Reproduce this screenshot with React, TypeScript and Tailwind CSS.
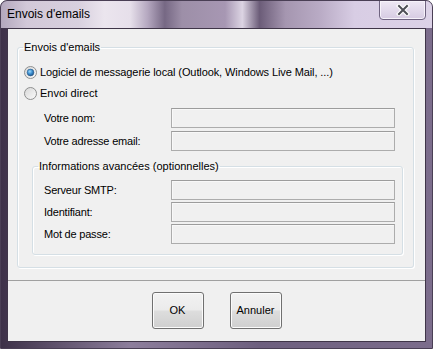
import React from "react";

const font = { fontFamily: '"Liberation Sans", Arial, sans-serif' };

function Radio({ checked }: { checked: boolean }) {
  return (
    <svg width="13" height="13" viewBox="0 0 13 13" className="shrink-0">
      <defs>
        <linearGradient id={checked ? "rgA" : "rgB"} x1="0" y1="0" x2="1" y2="1">
          <stop offset="0" stopColor="#d6d6d6" />
          <stop offset="1" stopColor="#fbfbfb" />
        </linearGradient>
        <radialGradient id="rdot" cx="0.4" cy="0.35" r="0.7">
          <stop offset="0" stopColor="#9fd8fb" />
          <stop offset="0.5" stopColor="#3b8fd0" />
          <stop offset="1" stopColor="#1d4f84" />
        </radialGradient>
      </defs>
      <circle cx="6.5" cy="6.5" r="6" fill={`url(#${checked ? "rgA" : "rgB"})`} stroke="#8e8f8f" strokeWidth="1" />
      {checked && <circle cx="6.5" cy="6.5" r="3.4" fill="url(#rdot)" stroke="#2a5b8a" strokeWidth="0.6" />}
    </svg>
  );
}

function Field({ label, indent }: { label: string; indent: string }) {
  return (
    <div className={`flex items-center h-[20px] ${indent}`}>
      <span className="w-[127px] shrink-0 text-[11px] leading-[13px] tracking-[-0.2px] text-black">{label}</span>
      <div className="w-[224px] h-[20px] border border-[#acacac] border-t-[#9c9c9c] bg-[#f0f0f0] shadow-[inset_1px_1px_0_#f8f8f8]" />
    </div>
  );
}

function Btn({ children }: { children: React.ReactNode }) {
  return (
    <div className="w-[52px] h-[37px] rounded-[3px] border border-[#707070] bg-[linear-gradient(180deg,#f2f2f2_0%,#ebebeb_48%,#dddddd_52%,#cfcfcf_100%)] shadow-[inset_0_0_0_1px_#fbfbfb] flex items-center justify-center text-[11px] text-black">
      {children}
    </div>
  );
}

export default function App() {
  return (
    <div
      style={font}
      className="w-[433px] h-[349px] flex flex-col rounded-t-[7px] border border-[#4a3f55] overflow-hidden bg-[linear-gradient(90deg,#3d3148_0%,#8d7e9c_30%,#6d5f7e_60%,#7c6d8c_100%)]"
    >
      {/* Title bar */}
      <div className="h-[27px] flex items-start shrink-0 bg-[linear-gradient(90deg,#b3a8bd_0%,#d2c8d8_6%,#d8d0de_18%,#ebe5ee_24%,#e6dfea_30%,#b5a8c0_34%,#766884_38%,#9d8fa8_42%,#a797b3_52%,#dcd4e3_56%,#6b5c78_60%,#a596b0_66%,#b9abc5_74%,#d8cde4_82%,#dcd2e7_100%)]">
        <span className="ml-[6px] mt-[6px] text-[12px] leading-[15px] text-black">Envois d'emails</span>
        <div className="ml-auto mr-[6px] -mt-[1px] w-[47px] h-[20px] rounded-b-[4px] border border-[#6f6380] bg-[linear-gradient(180deg,#eee8f4_0%,#e2d9eb_50%,#d6cbe2_100%)] shadow-[inset_0_0_0_1px_#f6f2fa] flex items-center justify-center">
          <svg width="14" height="12" viewBox="0 0 14 12">
            <path d="M3 2 L11 10 M11 2 L3 10" stroke="#ffffff" strokeWidth="4.2" strokeLinecap="square" />
            <path d="M3 2 L11 10 M11 2 L3 10" stroke="#4e4e56" strokeWidth="2" strokeLinecap="square" />
          </svg>
        </div>
      </div>

      {/* Client area */}
      <div className="flex-1 mx-[6px] mb-[6px] border border-[#3f3548] bg-[#f0f0f0] flex flex-col">
        <div className="pt-[12px] pl-[9px] pr-[11px]">
          <fieldset className="border border-[#d5dfe5] rounded-[3px] shadow-[inset_1px_1px_0_#ffffff,1px_1px_0_#ffffff] pb-[12px]">
            <legend className="ml-[5px] px-[1px] text-[11px] leading-[13px] text-black">Envois d'emails</legend>
            <div className="pt-[8px] flex flex-col">
              <div className="h-[21px] flex items-center pl-[6px] gap-[3px]">
                <Radio checked />
                <span className="text-[11px] leading-[13px] tracking-[-0.1px] text-black">Logiciel de messagerie local (Outlook, Windows Live Mail, ...)</span>
              </div>
              <div className="h-[21px] flex items-center pl-[6px] gap-[3px]">
                <Radio checked={false} />
                <span className="text-[11px] leading-[13px] text-black">Envoi direct</span>
              </div>
              <div className="mt-[4px] flex flex-col gap-[3px]">
                <Field label="Votre nom:" indent="pl-[26px]" />
                <Field label="Votre adresse email:" indent="pl-[26px]" />
              </div>
              <fieldset className="mt-[9px] ml-[14px] mr-[10px] border border-[#d5dfe5] rounded-[3px] shadow-[inset_1px_1px_0_#ffffff,1px_1px_0_#ffffff] pb-[10px]">
                <legend className="ml-[5px] px-[1px] text-[11px] leading-[13px] text-black">Informations avancées (optionnelles)</legend>
                <div className="pt-[7px] flex flex-col gap-[2px]">
                  <Field label="Serveur SMTP:" indent="pl-[11px]" />
                  <Field label="Identifiant:" indent="pl-[11px]" />
                  <Field label="Mot de passe:" indent="pl-[11px]" />
                </div>
              </fieldset>
            </div>
          </fieldset>
        </div>
        <div className="mt-[12px] border-t border-[#a0a0a0] shadow-[inset_0_1px_0_#ffffff]" />
        <div className="pt-[11px] flex justify-center gap-[26px]">
          <Btn>OK</Btn>
          <Btn>Annuler</Btn>
        </div>
      </div>
    </div>
  );
}
